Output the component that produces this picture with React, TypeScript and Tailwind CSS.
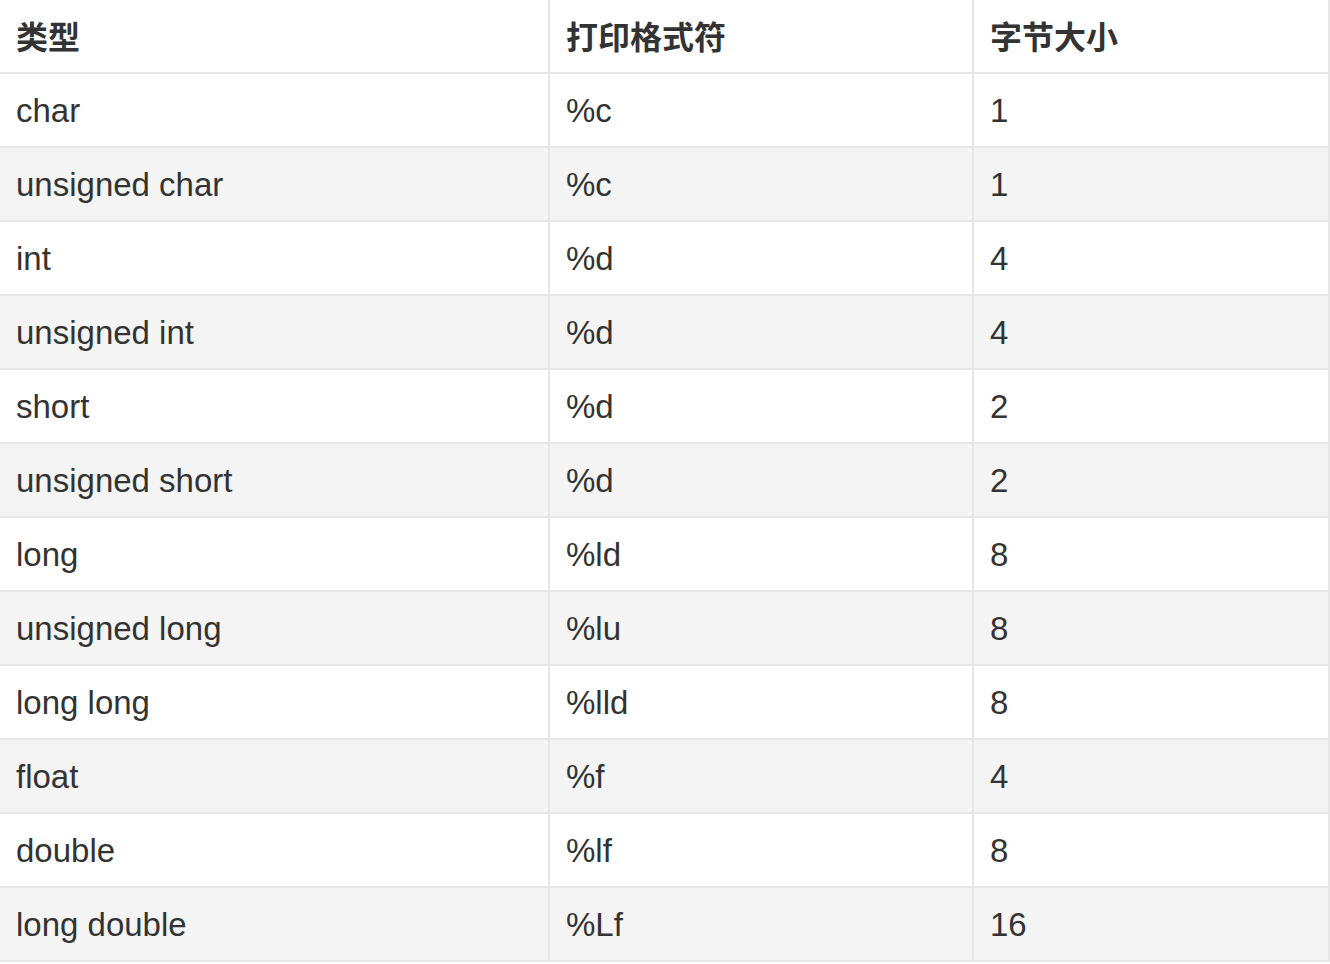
const rows: [string, string, string][] = [
  ['char', '%c', '1'],
  ['unsigned char', '%c', '1'],
  ['int', '%d', '4'],
  ['unsigned int', '%d', '4'],
  ['short', '%d', '2'],
  ['unsigned short', '%d', '2'],
  ['long', '%ld', '8'],
  ['unsigned long', '%lu', '8'],
  ['long long', '%lld', '8'],
  ['float', '%f', '4'],
  ['double', '%lf', '8'],
  ['long double', '%Lf', '16'],
]

const font = { fontFamily: '"Liberation Sans", "Noto Sans CJK SC", sans-serif' }

export default function App() {
  return (
    <div className="bg-white w-[1330px] h-[964px] overflow-hidden text-[#333333]" style={font}>
      <div className="grid grid-cols-[550px_424px_356px]">
        {['类型', '打印格式符', '字节大小'].map(h => (
          <div key={h} className="h-[74px] flex items-center pl-4 pt-[3px] border-r-2 border-b-2 border-[#e7e7e7] text-[32px] font-bold">{h}</div>
        ))}
        {rows.map((r, i) =>
          r.map((c, j) => (
            <div key={i + '-' + j} className={`h-[74px] flex items-center pl-4 pt-[2px] border-r-2 border-b-2 border-[#e7e7e7] text-[33px] ${i % 2 === 1 ? 'bg-[#f4f4f4]' : 'bg-white'}`}>{c}</div>
          ))
        )}
      </div>
    </div>
  )
}
